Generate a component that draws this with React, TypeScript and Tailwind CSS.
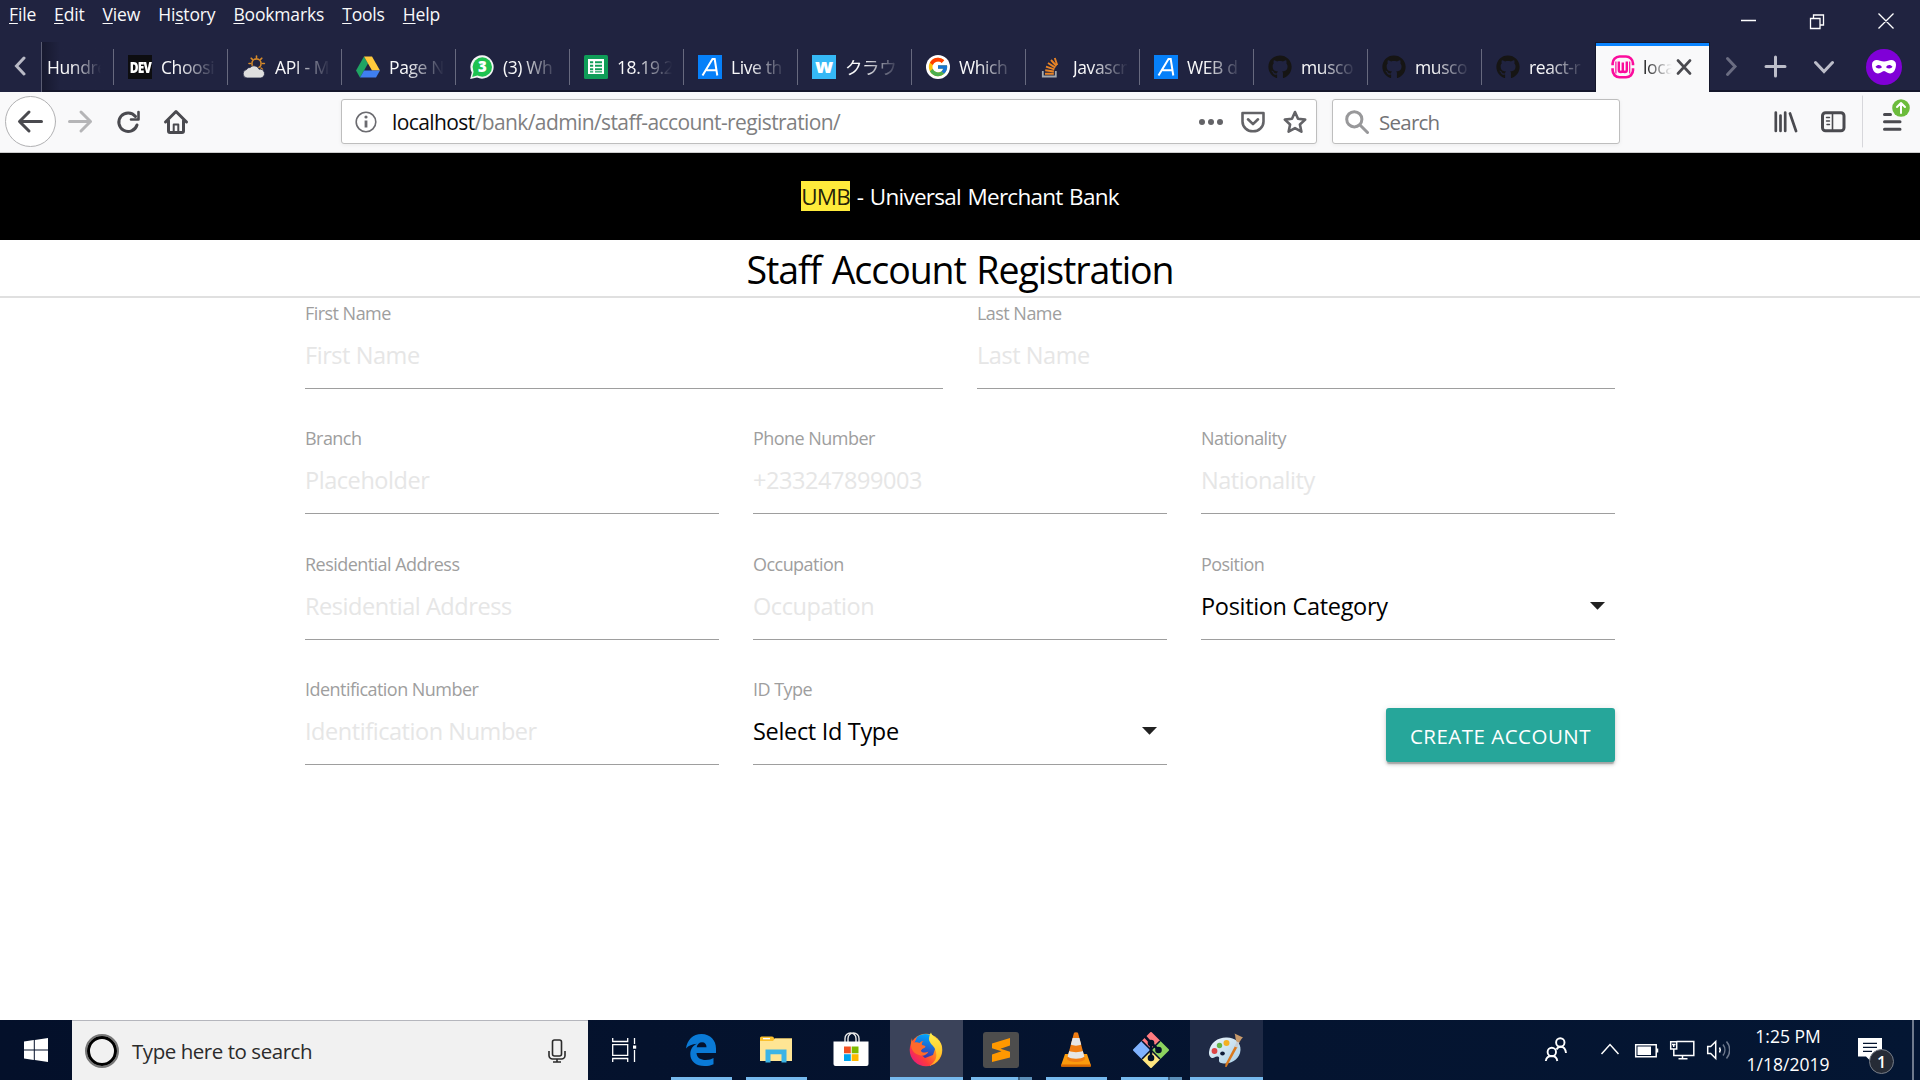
import React from 'react';
import { FcGoogle } from 'react-icons/fc';
import { FaGithub } from 'react-icons/fa';

function DevIcon() {
  return (
    <span className="flex size-6 items-center justify-center bg-[#0d0d10]">
      <span className="text-[15px] leading-none font-extrabold tracking-[-1px] scale-x-[.8] text-white">DEV</span>
    </span>
  );
}

function WeatherIcon() {
  return (
    <svg viewBox="0 0 24 24" className="size-6">
      <g stroke="#d68a2a" strokeWidth="1.6" fill="none" strokeLinecap="round">
        <circle cx="14.5" cy="8.5" r="4.6" />
        <path d="M14.5 1v1.6M9.2 3.2l1.2 1.2M19.8 3.2l-1.2 1.2M7 8.5h1.4M20.6 8.5h1.8M19 13l1.4 1.3" />
      </g>
      <path d="M5 23a4.3 4.3 0 0 1-.4-8.5 3.3 3.3 0 0 1 3.6-2 5.3 5.3 0 0 1 8.8 1.7 4.5 4.5 0 0 1 2 8.8z" fill="#dedede" stroke="#202340" strokeWidth=".8" />
    </svg>
  );
}

function DriveIcon() {
  return (
    <svg viewBox="0 0 24 24" className="size-6">
      <path d="M8 1.5 0 15.5l4 7 8-14z" fill="#1fa463" />
      <path d="M8 1.5h8l8 14h-8z" fill="#ffc93c" />
      <path d="M8 15.5h16l-4 7H4z" fill="#3f7ff0" />
    </svg>
  );
}

function WhatsAppIcon() {
  return (
    <svg viewBox="0 0 24 24" className="size-6">
      <path d="M12.3.3A11.7 11.7 0 1 1 7 22.600L.2 24l1.600-6.400A11.700 11.700 0 0 1 12.300.300z" fill="#f4f4f4" />
      <circle cx="12.300" cy="12" r="9.700" fill="#1fc250" />
      <path d="M2.200 22 4 15l5 5z" fill="#1fc250" />
      <text x="12.300" y="17.300" textAnchor="middle" fontSize="15" fontWeight="800" fill="#fff" fontFamily="Open Sans">3</text>
    </svg>
  );
}

function SheetsIcon() {
  return (
    <svg viewBox="0 0 24 24" className="size-6">
      <rect width="24" height="24" rx="1.500" fill="#0f9d58" />
      <path d="M4 4h16v15H4z" fill="#fff" />
      <path d="M6 6.200h3.200v2H6zM11 6.200h7v2h-7zM6 9.700h3.200v2H6zM11 9.700h7v2h-7zM6 13.200h3.200v2H6zM11 13.200h7v2h-7zM6 16.300h3.200v1.300H6zM11 16.300h7v1.300h-7z" fill="#0f9d58" />
    </svg>
  );
}

function LetterAIcon() {
  return (
    <svg viewBox="0 0 24 24" className="size-6">
      <path d="M0 0h24v24H0z" fill="#0680f9" />
      <path d="M4.500 20.500 14.500 4h2.200l2.600 16.500M8.500 15.200h9.300" fill="none" stroke="#fff" strokeWidth="2" />
    </svg>
  );
}

function LetterWIcon() {
  return (
    <span className="flex size-6 items-center justify-center bg-[#35b8f5]">
      <span className="pb-[2px] text-[20px] leading-none font-extrabold text-white">w</span>
    </span>
  );
}

function GoogleIcon() {
  return (
    <span className="flex size-6 items-center justify-center rounded-full bg-white">
      <FcGoogle className="size-[22px]" />
    </span>
  );
}

function StackIcon() {
  return (
    <svg viewBox="0 0 24 24" className="size-6" fill="none">
      <path d="M2.800 16v5.500h13V16" stroke="#a3a8ad" strokeWidth="1.800" />
      <g stroke="#e88426" strokeWidth="1.900">
        <path d="M5 18.700h8.800M5.200 15.300l8.700 1.200M6 11.700l8.400 2.700M8 8l7.300 4.600M11 5l5.500 6M14.800 3l2.400 7" />
      </g>
    </svg>
  );
}

function GithubIcon() {
  return <FaGithub className="size-6 text-[#161514]" />;
}

function WampIcon() {
  return (
    <svg viewBox="0 0 24 24" className="size-6" fill="none" stroke="#fb0c9c">
      <path d="M1.600 10.300V8.500A7 7 0 0 1 8.500 1.500h6.500A7 7 0 0 1 22 8.500v1.800M1.600 13.300v2a7 7 0 0 0 6.900 7h6.500a7 7 0 0 0 7-7v-2" strokeWidth="2.600" />
      <path d="M4.900 18.500V6.500M18.700 18.500V6.500" strokeWidth="1.200" />
      <path d="M7.800 6.500v8.500a2 2 0 0 0 4 0V7.500v7.500a2 2 0 0 0 4 0V6.500" strokeWidth="2.400" />
    </svg>
  );
}

const tabs: { title: string; icon: React.ReactNode }[] = [
  { title: 'Choosi', icon: <DevIcon /> },
  { title: 'API - M', icon: <WeatherIcon /> },
  { title: 'Page N', icon: <DriveIcon /> },
  { title: '(3) Wh', icon: <WhatsAppIcon /> },
  { title: '18.19.2', icon: <SheetsIcon /> },
  { title: 'Live th', icon: <LetterAIcon /> },
  { title: 'クラウ', icon: <LetterWIcon /> },
  { title: 'Which', icon: <GoogleIcon /> },
  { title: 'Javascr', icon: <StackIcon /> },
  { title: 'WEB d', icon: <LetterAIcon /> },
  { title: 'musco', icon: <GithubIcon /> },
  { title: 'musco', icon: <GithubIcon /> },
  { title: 'react-r', icon: <GithubIcon /> },
];

const menu = ['File', 'Edit', 'View', 'History', 'Bookmarks', 'Tools', 'Help'];

function MenuItem({ label }: { label: string }) {
  const k = label === 'History' ? 2 : 0;
  return (
    <span>
      {label.slice(0, k)}
      <span className="underline decoration-1 underline-offset-2">{label[k]}</span>
      {label.slice(k + 1)}
    </span>
  );
}

function TitleBar() {
  return (
    <div className="flex h-[42px] justify-between text-[#f9f9fa]">
      <div className="flex gap-[18px] pt-[2px] pl-[9px] text-[17.5px] leading-6 tracking-[-0.160px]">
        {menu.map((m) => (
          <MenuItem key={m} label={m} />
        ))}
      </div>
      <svg viewBox="0 0 180 42" className="h-[42px] w-[180px]" fill="none" stroke="#fff" strokeWidth="1.300">
        <path d="M1 20.500h15M70.500 18.500h9.500v10h-9.500zM73.500 18.500v-3.500h10v10h-3.500M138.500 13.500l15 15M153.500 13.500l-15 15" />
      </svg>
    </div>
  );
}

function TabStrip() {
  return (
    <div className="flex h-[50px] text-[17.5px] tracking-[-0.4px] text-[#f9f9fa]">
      <div className="flex w-[42px] items-center justify-center border-r border-[#5b5d73] pr-[1px]">
        <svg viewBox="0 0 12 20" className="mt-[-2px] h-5 w-3" fill="none" stroke="#b9bac6" strokeWidth="3" strokeLinecap="round">
          <path d="M10 2 2.500 10l7.500 8" />
        </svg>
      </div>
      <div className="flex w-[71px] items-center bg-linear-to-r from-[#17192f] to-[#202340] to-25% pl-[5px] shadow-[inset_0_-2px_0_#15172b]">
        <span className="w-[60px] whitespace-nowrap mask-[linear-gradient(to_right,black_40%,transparent_90%)]">Hundre</span>
      </div>
      {tabs.map((t, i) => (
        <div key={i} className="flex h-[50px] w-[114px] items-center shadow-[inset_0_-2px_0_#15172b]">
          <span className="h-9 w-px bg-[#67697e]" />
          <span className="ml-[14px] flex size-6 shrink-0 items-center justify-center">{t.icon}</span>
          <span className="ml-[9px] w-[60px] font-['Open_Sans','Noto_Sans_CJK_JP',sans-serif] leading-6 whitespace-nowrap mask-[linear-gradient(to_right,black_30%,transparent_92%)]">
            {t.title}
          </span>
        </div>
      ))}
      <div className="mt-px ml-px flex w-[113px] items-center border-t-3 border-[#0a84ff] bg-[#f9f9fa] pb-1 pl-[15px] text-[#0c0c0d] shadow-[0_0_0_1px_#15172b]">
        <WampIcon />
        <span className="ml-[8px] w-[34px] whitespace-nowrap mask-[linear-gradient(to_right,black,transparent_85%)]">loca</span>
        <svg viewBox="0 0 16 16" className="ml-[-1px] size-4" stroke="#4a4a4f" strokeWidth="2.600" strokeLinecap="round">
          <path d="m2 1.500 12 13M14 1.500l-12 13" />
        </svg>
      </div>
      <div className="flex flex-1 items-center shadow-[inset_0_-2px_0_#15172b]">
        <svg viewBox="0 0 211 50" className="h-[50px] w-[211px]" fill="none" stroke="#bcbdc9" strokeWidth="3" strokeLinecap="round">
          <path d="m18.500 16.500 7.500 8-7.500 8" stroke="#6b6d82" />
          <path d="M57 24.500h19M66.500 15v19M106.500 20.500l8.500 9 8.500-9" />
          <circle cx="175" cy="25" r="18" fill="#8000d7" stroke="none" />
          <path
            d="M163 22.500c0-4 4-5.500 8-3.800 2.500 1.100 5.500 1.100 8 0 4-1.700 8-.2 8 3.800 0 5-2.500 9-6 9-3 0-4-2.500-6-2.500s-3 2.500-6 2.500c-3.500 0-6-4-6-9z"
            fill="#fff"
            stroke="none"
          />
          <path d="M166.500 24.800c2-2.300 5-2.300 6.500.4-2 1.800-5 1.800-6.500-.4zM183.500 24.800c-2-2.300-5-2.300-6.500.4 2 1.800 5 1.800 6.500-.4z" fill="#8000d7" stroke="none" />
        </svg>
      </div>
    </div>
  );
}

function NavBar() {
  return (
    <div className="flex h-[61px] border-b border-[#ccc] bg-[#f9f9fa]">
      <svg viewBox="0 0 341 60" className="h-[60px] w-[341px]" fill="none" stroke="#4a4a4f" strokeWidth="3" strokeLinecap="round" strokeLinejoin="round">
        <circle cx="30.500" cy="29.500" r="25" fill="#fff" stroke="#b1b1b3" strokeWidth="1" />
        <path d="M20 29.500h21.500M29 20l-9.500 9.500 9.500 9.500" />
        <path d="M69.500 29.500h21M81 20l9.500 9.500-9.500 9.500" stroke="#b5b5b7" />
        <path d="M135.500 24.500a9.300 9.300 0 1 0 1.500 8.500" />
        <path d="M138.500 20v7.500h-7.500" strokeWidth="2.600" />
        <path d="M165.500 30 176 19.500 186.500 30M168.500 28.500v10.500a1.500 1.500 0 0 0 1.500 1.500h12a1.500 1.500 0 0 0 1.500-1.500V28.500" />
        <path d="M173.700 40v-7.500h4.600V40" strokeWidth="2" />
      </svg>
      <div className="mt-[7px] flex h-[45px] w-[976px] items-center rounded-[3px] border border-[#bebebe] bg-white text-[21px] shadow-[0_1px_4px_rgba(0,0,0,0.06)]">
        <svg viewBox="0 0 24 24" className="ml-3 size-6" fill="none" stroke="#6b6b70" strokeWidth="1.600">
          <circle cx="12" cy="12" r="9.800" />
          <path d="M12 10.500v7" strokeWidth="2.800" />
          <circle cx="12" cy="7" r="1.600" fill="#6b6b70" stroke="none" />
        </svg>
        <div className="ml-[14px] flex-1 pt-[2px] tracking-[-0.6px] text-[#7f7f81]">
          <span className="text-[#0c0c0d]">localhost</span>/bank/admin/staff-account-registration/
        </div>
        <svg viewBox="0 0 109 24" className="mr-[8px] h-6 w-[109px]" fill="none" stroke="#636367" strokeWidth="2.600" strokeLinejoin="round" strokeLinecap="round">
          <g fill="#636367" stroke="none">
            <circle cx="3" cy="12" r="3" />
            <circle cx="12" cy="12" r="3" />
            <circle cx="21" cy="12" r="3" />
          </g>
          <path d="M43.500 3h21v8.500a10.500 9.800 0 0 1-21 0zM49 9.300l5 4.800 5-4.800" />
          <path d="m96 2 3 6.800 7.200.8-5.300 4.900 1.500 7.200-6.400-3.600-6.400 3.600 1.500-7.200-5.300-4.900 7.200-.8z" />
        </svg>
      </div>
      <div className="mt-[7px] ml-[15px] flex h-[45px] w-[288px] items-center rounded-[3px] border border-[#bebebe] bg-white shadow-[0_1px_4px_rgba(0,0,0,0.06)]">
        <svg viewBox="0 0 24 24" className="ml-3 size-6" fill="none" stroke="#98989a" strokeWidth="3" strokeLinecap="round">
          <circle cx="9.300" cy="9.300" r="7.600" />
          <path d="m15 15 7.500 7.500" />
        </svg>
        <span className="ml-[10px] pt-[2px] text-[20.5px] tracking-[-0.75px] text-[#737376]">Search</span>
      </div>
      <svg viewBox="0 0 300 60" className="h-[60px] w-[300px]" fill="none" stroke="#4a4a4f" strokeWidth="3" strokeLinecap="round" strokeLinejoin="round">
        <path d="M155.800 20.500V39M160.500 23.500V39M165.200 20.500V39M170 21.500l6 17.500" strokeWidth="2.700" />
        <rect x="202.500" y="20.800" width="21.500" height="18" rx="3" />
        <path d="M212.500 21v18" strokeWidth="1.600" />
        <path d="M206.500 25.500h3M206.500 29h3M207 32.500h2.500" strokeWidth="1.400" />
        <path d="M242.500 4v51" stroke="#d7d7db" strokeWidth="1" />
        <path d="M264.500 22.500h6M264.500 29.800h15.500M264.500 37.200h15.500" />
        <circle cx="281" cy="16" r="10" fill="#f9f9fa" stroke="none" />
        <circle cx="281" cy="16" r="8.800" fill="#6cbc3c" stroke="none" />
        <path d="M281 21v-9.500M277 15l4-4 4 4" stroke="#fff" strokeWidth="2" />
      </svg>
    </div>
  );
}

function Field({ label, placeholder, value }: { label: string; placeholder?: string; value?: string }) {
  return (
    <div className="flex h-[91px] flex-1 flex-col border-b border-[#9e9e9e] pt-[3px]">
      <span className="text-[18px] leading-6 tracking-[-0.54px] text-[#9e9e9e]">{label}</span>
      {value ? (
        <span className="mt-[14px] flex items-center justify-between text-[23.500px] leading-8 tracking-[-0.320px] text-black">
          {value}
          <svg viewBox="0 0 15 8" className="mr-[10px] h-2 w-[15px]" fill="#212121">
            <path d="M0 0h15L7.500 7.800z" />
          </svg>
        </span>
      ) : (
        <input
          placeholder={placeholder}
          className="mt-[14px] h-8 w-full text-[23.500px] leading-8 tracking-[-0.440px] outline-none placeholder:text-[#e6e6e6]"
        />
      )}
    </div>
  );
}

function Page() {
  return (
    <main className="flex flex-1 flex-col bg-white">
      <header className="flex h-[87px] items-center justify-center bg-black text-[22.500px] leading-[30px] text-white">
        <div className="tracking-[-0.750px] [word-spacing:1.500px]">
          <span className="inline-block h-[30px] bg-[#ffeb3b] leading-[31px] text-black/87">UMB</span> - Universal Merchant Bank
        </div>
      </header>
      <h1 className="flex h-[58px] justify-center border-b-2 border-[#e0e0e0] text-[37.500px] leading-[60px] tracking-[-1.050px] text-black [word-spacing:1.800px]">
        Staff Account Registration
      </h1>
      <form className="mx-auto flex w-[1310px] flex-col">
        <div className="flex gap-[34px]">
          <Field label="First Name" placeholder="First Name" />
          <Field label="Last Name" placeholder="Last Name" />
        </div>
        <div className="mt-[34px] flex gap-[34px]">
          <Field label="Branch" placeholder="Placeholder" />
          <Field label="Phone Number" placeholder="+233247899003" />
          <Field label="Nationality" placeholder="Nationality" />
        </div>
        <div className="mt-[35px] flex gap-[34px]">
          <Field label="Residential Address" placeholder="Residential Address" />
          <Field label="Occupation" placeholder="Occupation" />
          <Field label="Position" value="Position Category" />
        </div>
        <div className="mt-[34px] flex gap-[34px]">
          <Field label="Identification Number" placeholder="Identification Number" />
          <Field label="ID Type" value="Select Id Type" />
          <div className="flex flex-1 items-end justify-end pb-[3px]">
            <button
              type="button"
              className="h-[54px] w-[229px] rounded-[3px] bg-[#26a69a] pt-[3px] text-[20.500px] tracking-[0.480px] text-white shadow-[0_3px_3px_0_rgba(0,0,0,0.14),0_1px_7px_0_rgba(0,0,0,0.12),0_3px_1px_-1px_rgba(0,0,0,0.2)]"
            >
              CREATE ACCOUNT
            </button>
          </div>
        </div>
      </form>
    </main>
  );
}

function EdgeIcon() {
  return (
    <svg viewBox="0 0 30 32" className="h-8 w-[30px]">
      <path
        d="M0 14.500C1 6 7 0 15.500 0 24.500 0 30 6.500 30 14.500V19H10.500c.3 5 4.500 7 9.300 7 3.200 0 5.700-.8 7.700-2v6.200c-2.500 1.300-5.700 1.800-9 1.800C10 32 4.300 27.500 4.300 20c0-4.700 2.500-8.500 6.700-10.300C6 10 2.500 11.500 0 14.500zM10.700 13.300h9.800c0-3-1.500-5-4.500-5-2.800 0-4.800 2-5.300 5z"
        fill="#0a7ad6"
      />
    </svg>
  );
}

function ExplorerIcon() {
  return (
    <svg viewBox="0 0 32 28" className="h-7 w-8">
      <path d="M0 2a1.500 1.500 0 0 1 1.500-1.500H12a2 2 0 0 1 2 2h18V25H0z" fill="#fbc02d" />
      <path d="M0 5h13l2-2.500h17V25H0z" fill="#ffe594" />
      <path d="M3 2h7v1.300H3z" fill="#fff" />
      <path d="M5.500 13.500h21V26.500h-5v-8.300h-11v8.300h-5z" fill="#3cb4e6" />
    </svg>
  );
}

function StoreIcon() {
  return (
    <svg viewBox="0 0 36 35" className="h-[35px] w-9">
      <path d="M12 10V6.500a5.500 5.500 0 0 1 11 0V10M15 10V6.500a5.500 5.500 0 0 1 11 0V10" fill="none" stroke="#e8e8e8" strokeWidth="1.400" />
      <path d="M.500 9.500h35V32a2 2 0 0 1-2 2h-31a2 2 0 0 1-2-2z" fill="#fff" />
      <path d="M11 14.500h6.800v6.800H11z" fill="#f25022" />
      <path d="M18.700 14.500h6.800v6.800h-6.800z" fill="#7fba00" />
      <path d="M11 22.200h6.800V29H11z" fill="#00a4ef" />
      <path d="M18.700 22.200h6.800V29h-6.800z" fill="#ffb900" />
    </svg>
  );
}

function FirefoxIcon() {
  return (
    <svg viewBox="0 0 34 35" className="h-[35px] w-[34px]">
      <defs>
        <linearGradient id="ffBody" x1="1" y1="0" x2="0" y2=".9">
          <stop offset="0" stopColor="#fff44f" />
          <stop offset=".35" stopColor="#ff9a1f" />
          <stop offset=".7" stopColor="#ff3b3b" />
          <stop offset="1" stopColor="#e3128c" />
        </linearGradient>
        <linearGradient id="ffGlobe" x1=".6" y1="0" x2=".4" y2="1">
          <stop offset="0" stopColor="#00a8ff" />
          <stop offset="1" stopColor="#3a2fa8" />
        </linearGradient>
        <linearGradient id="ffTail" x1="0" y1="0" x2="0" y2="1">
          <stop offset="0" stopColor="#fff14d" />
          <stop offset="1" stopColor="#ffb01c" />
        </linearGradient>
      </defs>
      <circle cx="17" cy="18" r="16.300" fill="url(#ffBody)" />
      <path d="M8 5c5-4 12-4 16 0l3 9-3 9-8 3-6-5 3-4-4-4-4-1z" fill="url(#ffGlobe)" />
      <path d="M3 6c0 2 .7 3.600 2 4.700 2-.7 4-.6 5.500.3 1-1.300 2.400-2 4-2-1.500 1.500-2 2.600-1.500 4 1.500.3 3 .5 3.500 1.500-.5 2-4.500 2-4.500 4.500 1.500 2.500 5 1.500 7.500.5-1.500 3.500-6 5.500-9.500 3.500C2 21 .5 13 3 6z" fill="#ff6a2b" />
      <path d="M22 .5c.5 3 5 5.500 8.500 9C36 18 32 31 20 34c7-4 9-10 6-17-1-3-6-6-6-10 0-2.500 1-5 2-6.500z" fill="url(#ffTail)" />
    </svg>
  );
}

function SublimeIcon() {
  return (
    <svg viewBox="0 0 36 36" className="size-9">
      <rect width="36" height="36" rx="3" fill="#4d4d4d" />
      <path d="M27 6v7.500l-9.500 3.200 9.500 3v5.800L9 30v-7.500l9.500-3.200-9.500-3V11.500z" fill="#ff9800" />
    </svg>
  );
}

function VlcIcon() {
  return (
    <svg viewBox="0 0 30 35" className="h-[35px] w-[30px]">
      <path d="M4 22h22l4 11.500a.8.800 0 0 1-.7 1H.7a.8.800 0 0 1-.7-1z" fill="#fb9b0d" />
      <path d="M.3 32.500h29.400l.3 1.500-.7.700H.7L0 34z" fill="#d96800" />
      <path d="M13 .8c.8-.8 3.200-.8 4 0L24 27c-2 4-16 4-18 0z" fill="#f07d12" />
      <path d="M11.600 6h6.800l1.800 6.500c-2.500 1.500-8 1.500-10.400 0zM8.200 19c3 1.500 10.600 1.500 13.600 0l1.600 5.500c-3 3-13.800 3-16.800 0z" fill="#e6e6e6" />
    </svg>
  );
}

function GitIcon() {
  return (
    <svg viewBox="0 0 36 36" className="size-9">
      <g strokeLinejoin="round" strokeWidth="2">
        <path d="M18 1 26 9l-8 8-8-8z" fill="#ff7b80" stroke="#ff7b80" />
        <path d="M9 10l8 8-8 8-8-8z" fill="#80b3ff" stroke="#80b3ff" />
        <path d="M27 10l8 8-8 8-8-8z" fill="#8dd35f" stroke="#8dd35f" />
        <path d="M18 19l8 8-8 8-8-8z" fill="#ffe680" stroke="#ffe680" />
      </g>
      <g stroke="#04102a" fill="#04102a" strokeWidth="1.800">
        <path d="M9 9l18 18M27 9 9 27" strokeWidth="1.600" />
        <path d="M12 4.500l6 6.500v15M18 11l8 7" fill="none" strokeWidth="2.600" />
        <circle cx="18" cy="11" r="2.400" />
        <circle cx="25.500" cy="18" r="2.400" />
        <circle cx="18" cy="26" r="2.400" />
      </g>
    </svg>
  );
}

function PaintIcon() {
  return (
    <svg viewBox="0 0 36 36" className="size-9">
      <defs>
        <linearGradient id="palette" x1="0" y1="0" x2="1" y2="1">
          <stop offset="0" stopColor="#eef6fb" />
          <stop offset="1" stopColor="#a9cfe6" />
        </linearGradient>
      </defs>
      <path d="M1 20C2 10 11 5 19 5.500c8 .3 14 5 13.500 12.500C32 26 25 31.500 17 31.500c-4 0-6.500-1-6-3.500.3-2 .5-3.500-2-3.500-2 0-2.500 1.500-4.500 1.500S.7 23.500 1 20z" fill="url(#palette)" />
      <ellipse cx="14.500" cy="21.500" rx="2.300" ry="2" fill="#0d1b38" />
      <circle cx="6.500" cy="19" r="2.900" fill="#dd4545" />
      <circle cx="11.500" cy="13.500" r="2.700" fill="#63b548" />
      <circle cx="18.500" cy="11" r="3" fill="#f3b021" />
      <path d="M27 14l2.500 1L18.500 35h-1.300l.3-3z" fill="#d9791d" />
      <path d="M26.500 14.500 29 9l2.500 1.200L29 15.500z" fill="#c9cdd2" />
      <path d="M28.500 9.500c-1.500-3-.8-6-2-8l8.500 4c-1.800 1-2.300 3.500-4 5z" fill="#c79a6b" />
    </svg>
  );
}

const apps: { icon: React.ReactNode; mode: 'none' | 'open' | 'stacked' | 'active' | 'selected' }[] = [
  { icon: <EdgeIcon />, mode: 'open' },
  { icon: <ExplorerIcon />, mode: 'open' },
  { icon: <StoreIcon />, mode: 'none' },
  { icon: <FirefoxIcon />, mode: 'active' },
  { icon: <SublimeIcon />, mode: 'stacked' },
  { icon: <VlcIcon />, mode: 'open' },
  { icon: <GitIcon />, mode: 'stacked' },
  { icon: <PaintIcon />, mode: 'selected' },
];

const tile = {
  none: '',
  open: '',
  stacked: '',
  active: 'bg-[#3b435a]',
  selected: 'bg-[#1f2a45]',
};

function Taskbar() {
  return (
    <footer className="flex h-[60px] bg-linear-to-r from-[#04102a] to-[#041633] text-white">
      <div className="flex w-[72px] items-center justify-center">
        <svg viewBox="0 0 24 24" className="size-6" fill="#fff">
          <path d="M0 3.400 9.800 2v9.500H0zM10.800 1.900 24 0v11.500H10.800zM0 12.500h9.800V22L0 20.600zM10.800 12.500H24V24l-13.200-1.900z" />
        </svg>
      </div>
      <div className="flex w-[516px] items-center border-t border-[#b5b6bd] bg-[#f1f1f1] pl-[13px] text-[#2b2b2b]">
        <span className="size-[34px] rounded-full border-2 border-[#777]">
          <span className="block size-full rounded-full border-[3px] border-black" />
        </span>
        <span className="ml-[13px] flex-1 pt-[2px] text-[20.500px] tracking-[-0.450px]">Type here to search</span>
        <svg viewBox="0 0 18 24" className="mr-[22px] h-6 w-[18px]" fill="none" stroke="#2b2b2b" strokeWidth="1.600">
          <rect x="4.500" y="1" width="9" height="16" rx="2" />
          <path d="M1 12v4.500a3.500 3.500 0 0 0 3.500 3.500h9a3.500 3.500 0 0 0 3.500-3.500V12M9 20v3M5 23h8" />
        </svg>
      </div>
      <div className="flex w-[76px] items-center pl-6">
        <svg viewBox="0 0 25 24" className="h-6 w-[25px]" fill="none" stroke="#fff" strokeWidth="1.300">
          <path d="M.700 6.700h15v10.600h-15zM.700 0v3.500h15V0M.700 24v-3.500h15V24M22.500 0v6M22.500 12v12" />
          <path d="M21 7.500h3.200v3.200H21z" fill="#fff" stroke="none" />
        </svg>
      </div>
      {apps.map(({ icon, mode }, i) => (
        <div key={i} className="flex w-[75px] justify-center">
          <div className={`flex w-[73px] flex-col items-center ${tile[mode]}`}>
            <div className="flex h-[57px] items-center pt-[2px] pr-[2px]">{icon}</div>
            {mode === 'open' && <div className="h-[3px] w-[61px] bg-[#76b9ed]" />}
            {mode === 'stacked' && (
              <div className="flex h-[3px] w-[61px]">
                <div className="w-[47px] bg-[#76b9ed]" />
                <div className="w-[2px] bg-[#3c6182]" />
                <div className="w-3 bg-[#5b8fb8]" />
              </div>
            )}
            {(mode === 'active' || mode === 'selected') && <div className="h-[3px] w-full bg-[#76b9ed]" />}
          </div>
        </div>
      ))}
      <div className="flex flex-1 justify-end">
        <svg viewBox="0 0 200 60" className="h-[60px] w-[200px]" fill="none" stroke="#fff" strokeWidth="1.500">
          <g strokeWidth="1.900">
            <circle cx="30.300" cy="22.500" r="4.200" />
            <path d="M26.500 29.500c1-1.800 2.500-2.800 4.200-2.800 2.800 0 4.800 2.300 5.300 6.300" />
            <circle cx="21.800" cy="32" r="4.200" />
            <path d="M15.800 41c.5-4 2.500-5 6-5s5 1.500 5.500 5" />
          </g>
          <path d="m71.500 34 8.500-9.500 8.500 9.500" />
          <path d="M105.700 24.700h20.500v12h-20.500zM127.500 28.500v4" />
          <path d="M107.500 26.500h13.500v8.500h-13.500z" fill="#fff" stroke="none" />
          <path d="M146.500 21.500h17.300v14h-20V29M152.500 35.500v3.500M148.500 38.700h9M140.700 21.700h6v7.300h-6zM143.700 24v3M142 24.500h3.500" />
          <path d="M177.700 26.500h3l5-5v17l-5-5h-3z" />
          <path d="M189.500 27.500a5 5 0 0 1 0 5" />
          <path d="M193 24.500a9 9 0 0 1 0 11M196.500 21.500a13 13 0 0 1 0 17" stroke="#6d788c" />
        </svg>
        <div className="ml-[6px] flex w-[108px] flex-col items-center pt-[2px] pr-[4px] text-[17.500px] leading-7">
          <span>1:25 PM</span>
          <span>1/18/2019</span>
        </div>
        <div className="mr-[-1px] flex w-[70px] border-r-2 border-[#6f7a8c]">
          <div className="relative mt-[18px] ml-[14px] h-10 w-10">
            <svg viewBox="0 0 24 24" className="size-6">
              <path d="M0 0h24v18.500H13.500V24L8 18.500H0z" fill="#fff" />
              <path d="M5 5.300h14M5 9.300h14M5 13.300h9" stroke="#04142f" strokeWidth="1.200" />
            </svg>
            <span className="absolute top-[11px] left-[11px] flex size-[25px] items-center justify-center rounded-full border border-[#777d88] bg-[#262b36] text-[16px] leading-none font-semibold">
              1
            </span>
          </div>
        </div>
        <div className="w-[7px]" />
      </div>
    </footer>
  );
}

export default function App() {
  return (
    <div className="flex h-[1080px] w-[1920px] flex-col overflow-hidden bg-[#202340] font-['Open_Sans','Noto_Sans',sans-serif]">
      <TitleBar />
      <TabStrip />
      <NavBar />
      <Page />
      <Taskbar />
    </div>
  );
}
